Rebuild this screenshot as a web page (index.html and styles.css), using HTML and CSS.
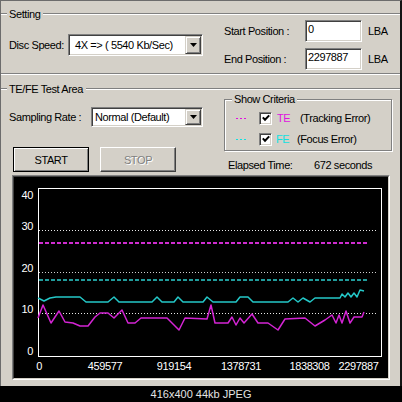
FILE: index.html
```html
<!DOCTYPE html>
<html>
<head>
<meta charset="utf-8">
<link rel="stylesheet" href="styles.css">
</head>
<body>
<div class="screen">
  <div class="window">
    <div class="gb-head"><span class="ln ln-left"></span><span class="gb-title">Setting</span><span class="ln ln-fill"></span></div>
    <div class="setting-body">
      <div class="disc">
        <span class="disc-lbl">Disc Speed:</span>
        <div class="combo combo-disc">
          <span class="combo-text">4X =&gt; ( 5540 Kb/Sec)</span>
          <span class="combo-btn"><svg width="7" height="4" viewBox="0 0 7 4"><polygon points="0,0 7,0 3.5,4" fill="#000"/></svg></span>
        </div>
      </div>
      <div class="pos">
        <span class="pos-lbl">Start Position :</span>
        <div class="edit">0</div>
        <span class="lba">LBA</span>
        <span class="pos-lbl">End Position :</span>
        <div class="edit">2297887</div>
        <span class="lba">LBA</span>
      </div>
    </div>
    <div class="gb-bottom"></div>

    <div class="gb-head tefe-head"><span class="ln ln-left"></span><span class="gb-title">TE/FE Test Area</span><span class="ln ln-fill"></span></div>
    <div class="tefe-body">
      <div class="tefe-left">
        <div class="samp">
          <span class="samp-lbl">Sampling Rate :</span>
          <div class="combo combo-samp">
            <span class="combo-text">Normal (Default)</span>
            <span class="combo-btn"><svg width="7" height="4" viewBox="0 0 7 4"><polygon points="0,0 7,0 3.5,4" fill="#000"/></svg></span>
          </div>
        </div>
        <div class="btns">
          <div class="btn btn-default">START</div>
          <div class="btn btn-disabled">STOP</div>
        </div>
      </div>
      <div class="tefe-right">
        <fieldset class="criteria">
          <legend>Show Criteria</legend>
          <div class="crit-row te">
            <span class="dash"></span>
            <span class="chk"><svg width="8" height="8" viewBox="0 0 8 8"><polyline points="0.8,3.4 3,5.8 7.2,1.4" fill="none" stroke="#000" stroke-width="2"/></svg></span>
            <span class="name">TE</span>
            <span class="desc">(Tracking Error)</span>
          </div>
          <div class="crit-row fe">
            <span class="dash"></span>
            <span class="chk"><svg width="8" height="8" viewBox="0 0 8 8"><polyline points="0.8,3.4 3,5.8 7.2,1.4" fill="none" stroke="#000" stroke-width="2"/></svg></span>
            <span class="name">FE</span>
            <span class="desc">(Focus Error)</span>
          </div>
        </fieldset>
        <div class="elapsed"><span class="el-lbl">Elapsed Time:</span><span>672 seconds</span></div>
      </div>
    </div>

    <div class="chart">
      <div class="chart-inner">
        <svg class="plot" width="374" height="201" viewBox="0 0 374 201">
          <rect x="24.5" y="11.5" width="343" height="168" fill="none" stroke="#fff"/>
          <line x1="25" y1="53.5" x2="364" y2="53.5" stroke="#e8e8e8" stroke-dasharray="1 2"/>
          <line x1="25" y1="66" x2="354" y2="66" stroke="#d02cd0" stroke-width="2" stroke-dasharray="4 2"/>
          <line x1="25" y1="95.5" x2="364" y2="95.5" stroke="#cfcfcf" stroke-dasharray="1 2"/>
          <line x1="25" y1="103" x2="354" y2="103" stroke="#2cd0d0" stroke-width="1.5" stroke-dasharray="4 2"/>
          <line x1="25" y1="136.5" x2="364" y2="136.5" stroke="#e8e8e8" stroke-dasharray="1 2"/>
          <polyline fill="none" stroke="#24c8c8" stroke-width="1.5" stroke-linejoin="round"
            points="24,121 30,124 36,121 42,120 66,120 72,125 94,125 100,120 105,125 138,125 143,120 148,125 160,125 164,120 169,125 189,125 193,120 199,125 222,125 226,120 234,120 239,125 274,125 279,121 284,125 289,121 296,125 301,121 306,121 326,121 328,117 331,120 334,116 337,120 340,116 343,120 346,113 350,114"/>
          <polyline fill="none" stroke="#d424d4" stroke-width="1.5" stroke-linejoin="round"
            points="24,141 29,128 37,146 45,134 51,145 59,146 66,149 74,149 81,140 86,136 94,136 100,141 108,133 114,146 121,146 127,141 153,141 165,153 171,141 193,142 197,128 201,146 214,146 218,140 222,148 226,141 230,146 238,137 244,146 254,146 264,153 271,142 291,141 301,149 311,143 318,138 322,146 325,138 328,146 332,134 336,146 340,140 348,140 350,135"/>
          <g class="ylab" text-anchor="end">
            <text x="19" y="22">40</text>
            <text x="19" y="53">30</text>
            <text x="19" y="95">20</text>
            <text x="19" y="136">10</text>
            <text x="19" y="178">0</text>
          </g>
          <g class="xlab" text-anchor="middle">
            <text x="25" y="193">0</text>
            <text x="91" y="193">459577</text>
            <text x="160" y="193">919154</text>
            <text x="227" y="193">1378731</text>
            <text x="295.5" y="193">1838308</text>
            <text x="344.5" y="193">2297887</text>
          </g>
        </svg>
      </div>
    </div>
  </div>
  <div class="caption">416x400 44kb JPEG</div>
</div>
</body>
</html>
```

FILE: styles.css
```css
* { box-sizing: border-box; }
html, body { margin: 0; padding: 0; }
body {
  width: 402px;
  height: 402px;
  overflow: hidden;
  background: #000;
  font-family: "Liberation Sans", Arial, sans-serif;
  font-size: 11px;
  letter-spacing: -0.4px;
  color: #000;
}
.screen { width: 402px; height: 402px; display: flex; flex-direction: column; }
.window {
  height: 386px;
  background: #d4d0c8;
  border-top: 1px solid #6c6c6c;
  border-left: 1px solid #6c6c6c;
  border-right: 2px solid #141414;
  display: flex;
  flex-direction: column;
}
.caption {
  height: 16px;
  line-height: 16px;
  text-align: center;
  color: #e4e4e4;
  font-size: 11px;
  letter-spacing: 0;
}

/* group box headers */
.gb-head { height: 10px; display: flex; align-items: center; margin-top: 8px; }
.tefe-head { margin-top: 9px; }
.ln { height: 2px; border-top: 1px solid #808080; border-bottom: 1px solid #fff; }
.ln-left { width: 6px; }
.ln-fill { flex: 1; }
.gb-title { margin: 0 3px 0 2px; line-height: 10px; white-space: nowrap; }
.gb-bottom { height: 2px; border-top: 1px solid #808080; border-bottom: 1px solid #fff; }

/* setting */
.setting-body { display: flex; align-items: center; padding: 1px 0 3px 8px; }
.disc { display: flex; align-items: center; }
.disc-lbl { width: 59px; white-space: nowrap; }
.pos {
  display: grid;
  grid-template-columns: 81px 57px auto;
  row-gap: 6px;
  margin-left: 21px;
  align-items: center;
}
.pos-lbl { white-space: nowrap; }
.lba { margin-left: 6px; }

.combo {
  display: flex;
  background: #fff;
  border: 1px solid;
  border-color: #808080 #fff #fff #808080;
  box-shadow: inset 1px 1px 0 #404040, inset -1px -1px 0 #d4d0c8;
  padding: 1px;
}
.combo-disc { width: 135px; height: 22px; }
.combo-samp { width: 112px; height: 20px; }
.combo-text { flex: 1; display: flex; align-items: center; white-space: nowrap; overflow: hidden; }
.combo-disc .combo-text { padding-left: 5px; }
.combo-samp .combo-text { padding-left: 2px; }
.combo-btn {
  width: 16px;
  background: #d4d0c8;
  border: 1px solid;
  border-color: #d4d0c8 #404040 #404040 #d4d0c8;
  box-shadow: inset 1px 1px 0 #fff, inset -1px -1px 0 #808080;
  display: flex;
  align-items: center;
  justify-content: center;
}
.combo-btn svg { display: block; }

.edit {
  width: 57px;
  height: 22px;
  background: #fff;
  border: 1px solid;
  border-color: #808080 #fff #fff #808080;
  box-shadow: inset 1px 1px 0 #404040, inset -1px -1px 0 #d4d0c8;
  padding: 2px 0 0 2px;
  line-height: 13px;
}

/* TE/FE area */
.tefe-body { display: flex; padding-left: 8px; }
.tefe-left { width: 215px; padding-top: 13px; }
.samp { display: flex; align-items: center; }
.samp-lbl { width: 82px; white-space: nowrap; }
.btns { display: flex; gap: 11px; margin-top: 20px; padding-left: 4px; }
.btn {
  width: 76px;
  height: 25px;
  display: flex;
  align-items: center;
  justify-content: center;
  background: #d4d0c8;
}
.btn-default {
  border: 1px solid #000;
  box-shadow: inset 1px 1px 0 #fff, inset -1px -1px 0 #808080;
}
.btn-disabled {
  border: 1px solid;
  border-color: #fff #404040 #404040 #fff;
  box-shadow: inset -1px -1px 0 #808080;
  color: #808080;
  text-shadow: 1px 1px 0 #fff;
}

.tefe-right { width: 168px; }
.criteria {
  margin: 0;
  padding: 6px 0 3px 0;
  border: 1px solid #808080;
  box-shadow: 1px 1px 0 #fff, inset 1px 1px 0 #fff;
  min-width: 0;
}
.criteria legend {
  margin-left: 7px;
  padding: 0 2px;
  line-height: 10px;
  background: #d4d0c8;
}
.crit-row { display: flex; align-items: center; height: 16px; }
.crit-row + .crit-row { margin-top: 5px; }
.te { color: #e010e0; }
.fe { color: #10e0e0; }
.dash {
  width: 10px;
  height: 1px;
  margin-left: 11px;
  background: repeating-linear-gradient(90deg, currentColor 0 2px, transparent 2px 4px);
}
.chk {
  width: 13px;
  height: 13px;
  margin-left: 13px;
  background: #fff;
  border: 1px solid;
  border-color: #808080 #fff #fff #808080;
  box-shadow: inset 1px 1px 0 #404040, inset -1px -1px 0 #d4d0c8;
  display: flex;
  align-items: center;
  justify-content: center;
}
.chk svg { display: block; }
.name { margin-left: 5px; width: 23px; }
.fe .name { margin-left: 4px; width: 21px; }
.desc { color: #000; white-space: nowrap; }

.elapsed { margin-top: 7px; height: 14px; line-height: 14px; display: flex; white-space: nowrap; }
.el-lbl { margin-left: 4px; width: 86px; }

/* chart */
.chart {
  margin: 3px 0 0 11px;
  width: 378px;
  height: 205px;
  border: 1px solid;
  border-color: #808080 #fff #fff #808080;
}
.chart-inner {
  height: 100%;
  border: 1px solid;
  border-color: #404040 #d4d0c8 #d4d0c8 #404040;
  background: #000;
}
.plot { display: block; }
.plot text { fill: #fff; font-size: 11px; font-family: "Liberation Sans", Arial, sans-serif; }
```
